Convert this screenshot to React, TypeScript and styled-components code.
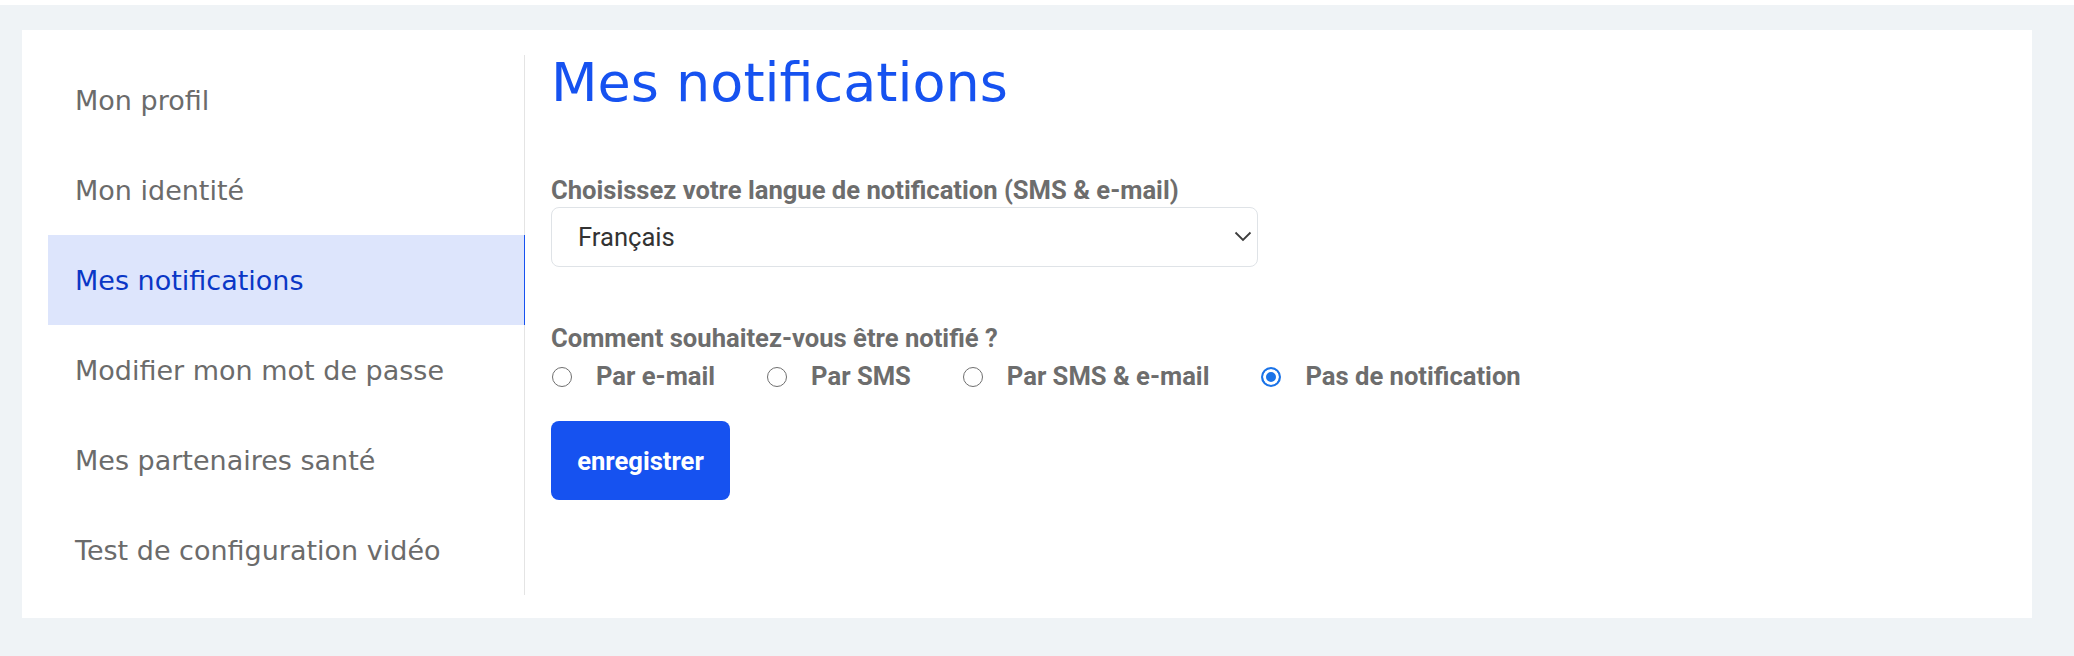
import styled, { createGlobalStyle } from 'styled-components';

const GlobalStyle = createGlobalStyle`
  html, body {
    margin: 0;
    padding: 0;
    background: #ffffff;
  }
  * {
    box-sizing: border-box;
  }
`;

const menuItems = [
  'Mon profil',
  'Mon identité',
  'Mes notifications',
  'Modifier mon mot de passe',
  'Mes partenaires santé',
  'Test de configuration vidéo',
];

const channels = ['Par e-mail', 'Par SMS', 'Par SMS & e-mail', 'Pas de notification'];

function App() {
  return (
    <>
      <GlobalStyle />
      <Page>
        <Card>
          <Sidebar>
            {menuItems.map((item) => (
              <MenuItem key={item} $active={item === 'Mes notifications'}>
                {item}
              </MenuItem>
            ))}
          </Sidebar>
          <Content>
            <Title>Mes notifications</Title>
            <Label htmlFor="lang">
              Choisissez votre langue de notification (SMS &amp; e-mail)
            </Label>
            <SelectWrap>
              <Select id="lang" defaultValue="fr">
                <option value="fr">Français</option>
                <option value="en">English</option>
              </Select>
              <Chevron width="18" height="11" viewBox="0 0 18 11">
                <path d="M1.5 1.5 9 9l7.5-7.5" fill="none" stroke="#3d3d3d" strokeWidth="1.8" />
              </Chevron>
            </SelectWrap>
            <Question>Comment souhaitez-vous être notifié ?</Question>
            <RadioRow>
              {channels.map((c) => (
                <RadioOption key={c}>
                  <Radio
                    type="radio"
                    name="channel"
                    defaultChecked={c === 'Pas de notification'}
                  />
                  {c}
                </RadioOption>
              ))}
            </RadioRow>
            <SaveButton>enregistrer</SaveButton>
          </Content>
        </Card>
      </Page>
    </>
  );
}

export default App;

const Page = styled.div`
  margin-top: 5px;
  height: 651px;
  background: #eff3f6;
  padding: 25px 42px 38px 22px;
`;

const Card = styled.div`
  height: 588px;
  background: #ffffff;
  display: flex;
  align-items: flex-start;
  padding: 25px 26px 23px;
`;

const Sidebar = styled.nav`
  width: 477px;
  flex-shrink: 0;
  display: flex;
  flex-direction: column;
  border-right: 1px solid #e4e4e4;
`;

const MenuItem = styled.div<{ $active?: boolean }>`
  height: 90px;
  display: flex;
  align-items: center;
  padding-left: 27px;
  margin-right: -1px;
  font-family: 'DejaVu Sans', sans-serif;
  font-size: 27px;
  color: ${(p) => (p.$active ? '#0a37c6' : '#6b6b6b')};
  background: ${(p) => (p.$active ? '#dde5fc' : 'transparent')};
  border-right: 1px solid ${(p) => (p.$active ? '#1652f0' : 'transparent')};
`;

const Content = styled.div`
  flex: 1;
  display: flex;
  flex-direction: column;
  align-items: flex-start;
  padding-left: 26px;
  font-family: Roboto, 'Liberation Sans', sans-serif;
`;

const Title = styled.h1`
  margin: 1px 0 0;
  font-family: 'DejaVu Sans', sans-serif;
  font-weight: normal;
  font-size: 54px;
  line-height: 1;
  color: #1652f0;
`;

const Label = styled.label`
  margin-top: 65px;
  font-size: 25.6px;
  line-height: 1.2;
  font-weight: 700;
  color: #6d6d6d;
`;

const SelectWrap = styled.div`
  position: relative;
  margin-top: 1px;
  width: 707px;
`;

const Select = styled.select`
  width: 100%;
  height: 60px;
  appearance: none;
  border: 1px solid #dfe3e7;
  border-radius: 8px;
  background: #ffffff;
  padding: 0 40px 0 26px;
  font-family: Roboto, 'Liberation Sans', sans-serif;
  font-size: 25.6px;
  color: #333333;
`;

const Chevron = styled.svg`
  position: absolute;
  right: 6px;
  top: 24px;
  pointer-events: none;
`;

const Question = styled.div`
  margin-top: 56px;
  font-size: 25.6px;
  line-height: 1.2;
  font-weight: 700;
  color: #6d6d6d;
`;

const RadioRow = styled.div`
  margin-top: 8px;
  display: flex;
  gap: 52px;
  padding-left: 1px;
`;

const RadioOption = styled.label`
  display: inline-flex;
  align-items: center;
  gap: 24px;
  font-size: 25.6px;
  line-height: 1.2;
  font-weight: 700;
  color: #6d6d6d;
`;

const Radio = styled.input`
  appearance: none;
  margin: 0;
  width: 20px;
  height: 20px;
  border-radius: 50%;
  border: 1.5px solid #6f6f6f;
  background: #ffffff;

  &:checked {
    border: 2px solid #1a73e8;
    background: #1a73e8;
    box-shadow: inset 0 0 0 3px #ffffff;
  }
`;

const SaveButton = styled.button`
  margin-top: 29px;
  width: 179px;
  height: 79px;
  border: none;
  border-radius: 8px;
  background: #1652f0;
  color: #ffffff;
  font-family: Roboto, 'Liberation Sans', sans-serif;
  font-size: 25.6px;
  font-weight: 700;
`;
